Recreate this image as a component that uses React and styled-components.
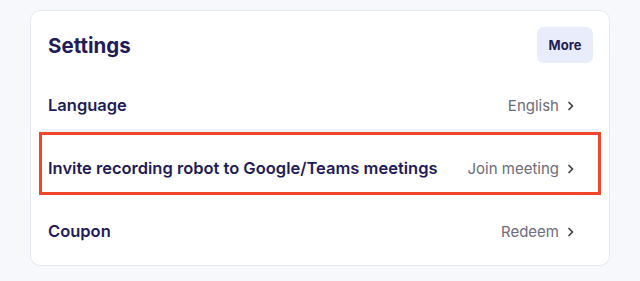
import React from "react";
import styled, { createGlobalStyle } from "styled-components";

const GlobalStyle = createGlobalStyle`
  body {
    margin: 0;
    background: #f6f8fc;
    font-family: Inter, "Noto Sans", sans-serif;
  }
`;

const Page = styled.div`
  padding: 10px 30px;
`;

const Card = styled.div`
  background: #ffffff;
  border: 1px solid #e5e8f0;
  border-radius: 10px;
  padding: 16px 8px 7px 8px;
`;

const Header = styled.div`
  display: flex;
  align-items: center;
  justify-content: space-between;
  height: 36px;
  padding: 0 8px 0 9px;
  margin-bottom: 6px;
`;

const Title = styled.h2`
  margin: 0;
  font-size: 20.5px;
  font-weight: 700;
  color: #1f1c57;
`;

const MoreButton = styled.button`
  width: 56px;
  height: 36px;
  border: none;
  border-radius: 7px;
  background: #e8ecfb;
  color: #1f1c57;
  font-family: inherit;
  font-size: 13px;
  font-weight: 700;
  cursor: pointer;
`;

const Row = styled.div`
  display: flex;
  align-items: center;
  justify-content: space-between;
  height: 63px;
  box-sizing: border-box;
  padding: 24px 21px 14px 6px;
  border: 3px solid ${(p) => (p.$highlight ? "#f0472a" : "transparent")};
  border-bottom-color: ${(p) =>
    p.$highlight ? "#f0472a" : p.$last ? "transparent" : "#f1f2f6"};
`;

const Label = styled.span`
  font-size: 16.5px;
  line-height: 19px;
  font-weight: 600;
  color: #1f1c57;
`;

const Value = styled.span`
  display: flex;
  align-items: center;
  gap: 6px;
  font-size: 15px;
  line-height: 19px;
  color: #6c6c7a;
`;

const Chevron = () => (
  <svg width="12" height="12" viewBox="0 0 12 12" fill="none">
    <path
      d="M4 2.5L7.5 6L4 9.5"
      stroke="#3b3b4a"
      strokeWidth="1.7"
      strokeLinecap="round"
      strokeLinejoin="round"
    />
  </svg>
);

const rows = [
  { label: "Language", value: "English" },
  {
    label: "Invite recording robot to Google/Teams meetings",
    value: "Join meeting",
    highlight: true,
  },
  { label: "Coupon", value: "Redeem" },
];

export default function App() {
  return (
    <Page>
      <GlobalStyle />
      <Card>
        <Header>
          <Title>Settings</Title>
          <MoreButton>More</MoreButton>
        </Header>
        {rows.map((r, i) => (
          <Row key={r.label} $highlight={r.highlight} $last={i === rows.length - 1}>
            <Label>{r.label}</Label>
            <Value>
              {r.value}
              <Chevron />
            </Value>
          </Row>
        ))}
      </Card>
    </Page>
  );
}
